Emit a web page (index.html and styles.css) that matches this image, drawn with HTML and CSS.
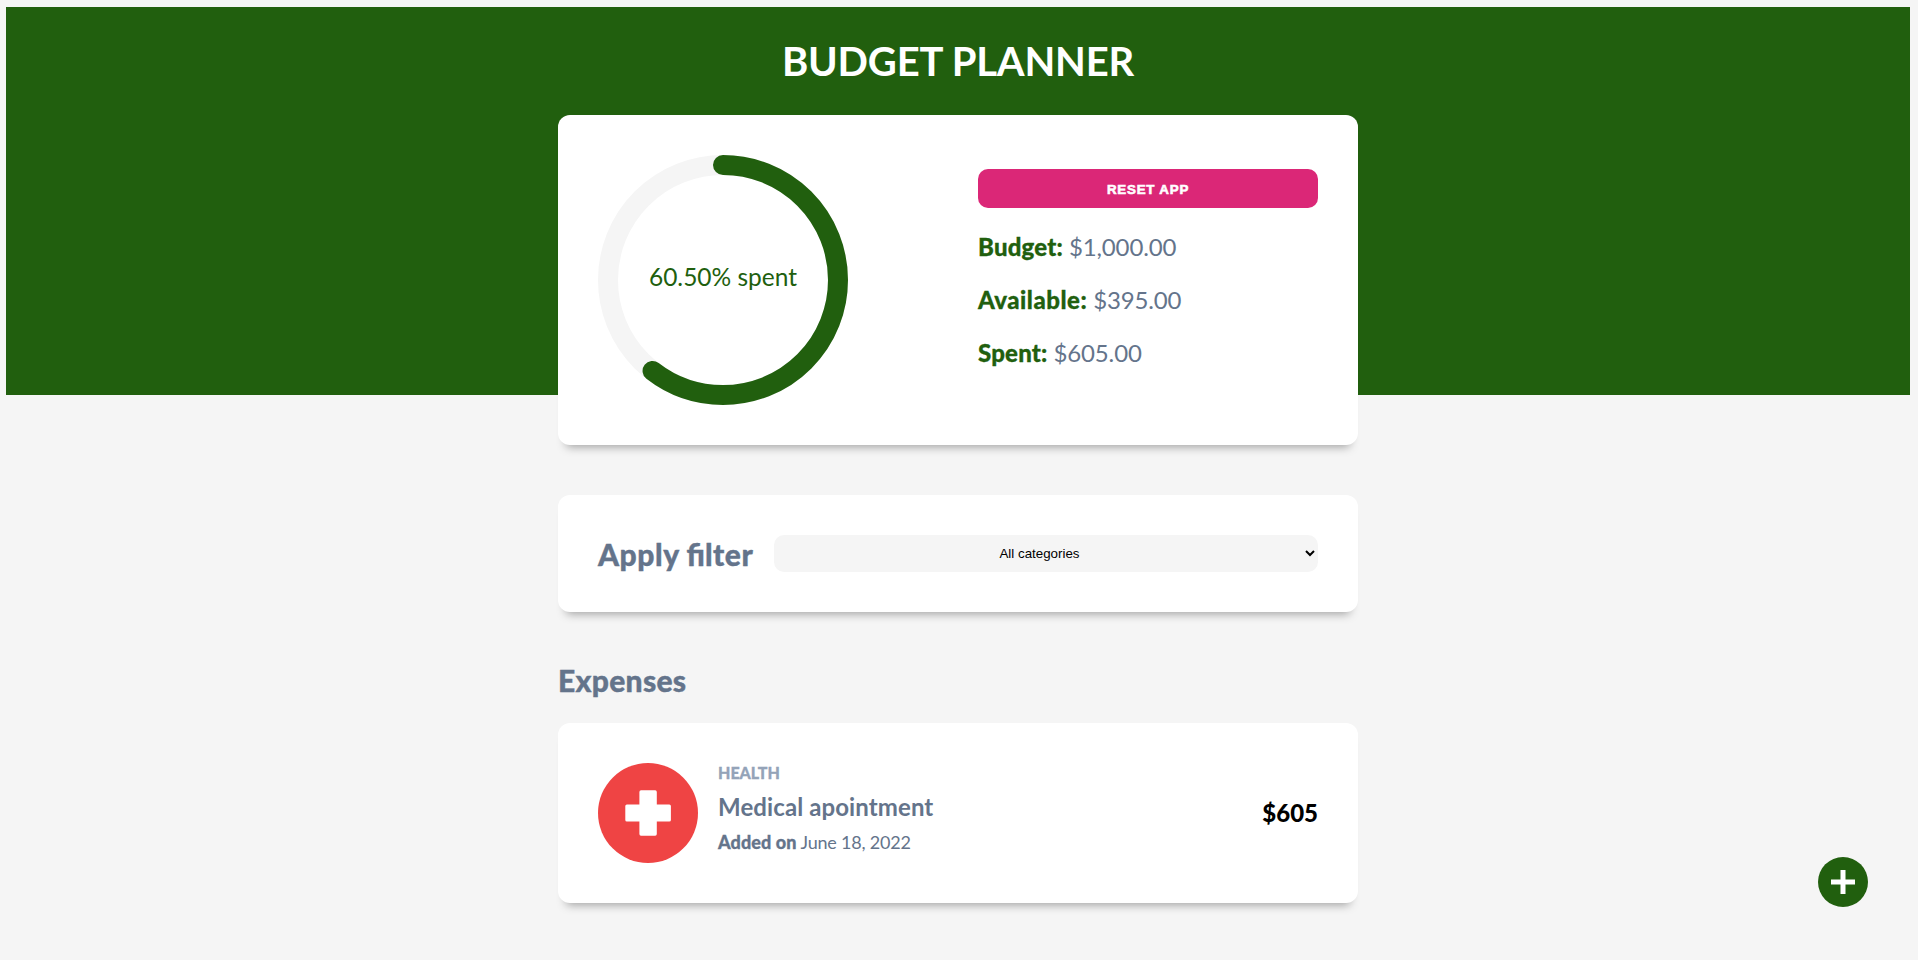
FILE: index.html
```html
<!DOCTYPE html>
<html lang="en">
<head>
<meta charset="utf-8">
<title>Budget Planner</title>
<link rel="stylesheet" href="styles.css">
</head>
<body>
<header class="header">
  <h1 class="title">BUDGET PLANNER</h1>
  <section class="card budget">
    <div class="progress">
      <svg class="ring" viewBox="0 0 250 250">
        <circle class="ring-trail" cx="125" cy="125" r="115"/>
        <circle class="ring-path" cx="125" cy="125" r="115" pathLength="100" stroke-dasharray="60.5 100" transform="rotate(-90 125 125)"/>
      </svg>
      <span class="progress-text">60.50% spent</span>
    </div>
    <div class="summary">
      <button class="reset" type="button">RESET APP</button>
      <p class="amount"><span class="label">Budget:</span> $1,000.00</p>
      <p class="amount"><span class="label label-wide">Available:</span> $395.00</p>
      <p class="amount"><span class="label">Spent:</span> $605.00</p>
    </div>
  </section>
</header>
<main class="main">
  <form class="card filter">
    <label class="filter-label" for="category">Apply <span class="ligature">fi</span>lter</label>
    <select class="select" id="category"><option>All categories</option></select>
  </form>
  <h2 class="heading">Expenses</h2>
  <article class="card expense">
    <svg class="expense-icon" viewBox="0 0 100 100">
      <circle cx="50" cy="50" r="50" fill="#ef4444"/>
      <path fill="#fff" d="M43 27.3h14.2q1.6 0 1.6 1.6v12.5h12.5q1.6 0 1.6 1.6v14q0 1.6-1.6 1.6H58.8v12.5q0 1.6-1.6 1.6H43q-1.6 0-1.6-1.6V58.6H28.9q-1.6 0-1.6-1.6V43q0-1.6 1.6-1.6h12.5V28.9q0-1.6 1.6-1.6z"/>
    </svg>
    <div class="expense-info">
      <p class="category">HEALTH</p>
      <p class="name">Medical apointment</p>
      <p class="date"><span class="date-label">Added on</span> June 18, 2022</p>
    </div>
    <p class="price">$605</p>
  </article>
</main>
<button class="add" type="button" aria-label="Add expense">
  <svg class="add-icon" viewBox="0 0 50 50"><path fill="#fff" d="M22.5 13h5v9.5H37v5h-9.5V37h-5v-9.5H13v-5h9.5z"/></svg>
</button>
</body>
</html>
```

FILE: styles.css
```css
* { box-sizing: border-box; }
body {
  margin: 0;
  padding: 7px 8px 0 6px;
  height: 960px;
  overflow: hidden;
  background: #f5f5f5;
  font-family: Lato, "Liberation Sans", sans-serif;
}
p, h1, h2 { margin: 0; }
.header {
  height: 388px;
  padding-top: 30px;
  background: #215f0e;
}
.title {
  margin-bottom: 30px;
  color: #fff;
  font-size: 40px;
  font-weight: 700;
  letter-spacing: -.18px;
  line-height: 48px;
  text-align: center;
}
.card {
  width: 800px;
  margin: 0 auto;
  padding: 40px;
  border-radius: 12px;
  background: #fff;
  box-shadow: 0 10px 10px -8px rgba(0, 0, 0, .35);
}
.budget {
  display: grid;
  grid-template-columns: 1fr 1fr;
  gap: 40px;
  height: 330px;
}
.progress {
  position: relative;
  width: 250px;
  height: 250px;
}
.ring { display: block; width: 250px; height: 250px; }
.ring circle { fill: none; stroke-width: 20; }
.ring .ring-trail { stroke: #f5f5f5; }
.ring .ring-path { stroke: #215f0e; stroke-linecap: round; }
.progress-text {
  position: absolute;
  inset: 0 0 8px;
  display: flex;
  align-items: center;
  justify-content: center;
  color: #215f0e;
  font-size: 24.5px;
}
.summary { padding-top: 14px; }
.reset {
  display: block;
  width: 100%;
  height: 39px;
  margin-bottom: 12px;
  padding: 1px 0 0;
  border: 0;
  border-radius: 10px;
  background: #db2777;
  color: #fff;
  font: 900 13.333px "Liberation Sans", Arial, sans-serif;
  letter-spacing: .8px;
  -webkit-text-stroke: .6px #fff;
}
.amount {
  color: #64748b;
  font-size: 24px;
  letter-spacing: -.15px;
  line-height: 53px;
}
.label {
  color: #215f0e;
  font-weight: 900;
  letter-spacing: .2px;
  -webkit-text-stroke: .3px;
}
.label-wide { letter-spacing: .5px; }
.main { padding-top: 100px; }
.filter {
  display: flex;
  align-items: center;
  gap: 20px;
  height: 117px;
}
.filter-label {
  width: 156px;
  padding-top: 2px;
  color: #64748b;
  font-size: 30px;
  font-weight: 900;
  letter-spacing: .55px;
  line-height: 37px;
  white-space: nowrap;
  -webkit-text-stroke: .4px;
}
.ligature { letter-spacing: 0; }
.select {
  flex: 1;
  height: 37px;
  padding: 10px 1px 10px 0;
  border: 0;
  border-radius: 10px;
  background-color: #f5f5f5;
  color: #000;
  font: 13.333px "Liberation Sans", Arial, sans-serif;
  text-align: center;
}
.heading {
  width: 800px;
  margin: 50px auto 25px;
  color: #64748b;
  font-size: 30px;
  font-weight: 900;
  letter-spacing: .3px;
  line-height: 36px;
  -webkit-text-stroke: .4px;
}
.expense {
  display: flex;
  gap: 20px;
  height: 180px;
}
.expense-icon { width: 100px; height: 100px; }
.expense-info {
  flex: 1;
  display: flex;
  flex-direction: column;
  gap: 10px;
  color: #64748b;
}
.category {
  color: #94a3b8;
  font-size: 16px;
  font-weight: 900;
  line-height: 19px;
  -webkit-text-stroke: .3px;
}
.name {
  font-size: 24px;
  font-weight: 700;
  letter-spacing: .1px;
  line-height: 29px;
}
.date { font-size: 18px; letter-spacing: -.2px; line-height: 22px; }
.date-label {
  font-weight: 900;
  letter-spacing: .1px;
  -webkit-text-stroke: .3px;
}
.price {
  align-self: center;
  padding-bottom: 2px;
  color: #000;
  font-size: 24px;
  font-weight: 900;
  line-height: 29px;
}
.add {
  position: fixed;
  right: 50px;
  bottom: 53px;
  width: 50px;
  height: 50px;
  padding: 0;
  border: 0;
  border-radius: 50%;
  background: #215f0e;
}
.add-icon { display: block; width: 50px; height: 50px; }
```
